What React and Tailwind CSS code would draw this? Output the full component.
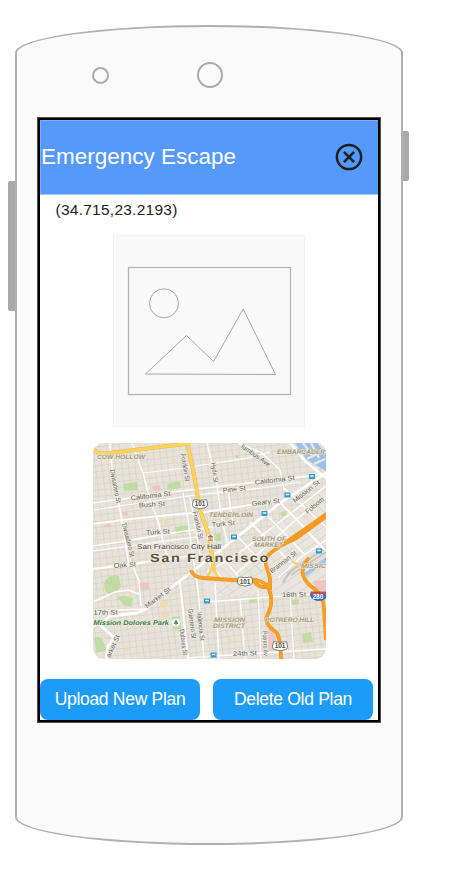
import React from "react";

const minorSteps = Array.from({ length: 48 }, (_, i) => i);

const whiteRoads = [
  ["M110 443 L112 468 L117 492 L122 522 L128 560 L130 566", 1.6],
  ["M132 443 L143 473 L150 500 L158 521 L168 560", 1.4],
  ["M143 473 L184 468 L248 458 L270 452", 1.2],
  ["M93 503 L138 497 L180 491 L206 488 L240 484 L300 477 L326 474", 1.3],
  ["M93 510 L140 503 L196 495 L262 488 L300 482", 1.2],
  ["M93 524 L130 519 L170 515 L205 512 L250 505 L280 499", 2.2],
  ["M93 546 L120 542 L160 535 L205 528 L236 523", 1.4],
  ["M93 551 L130 546 L165 541 L204 536", 1.2],
  ["M93 569 L125 565 L160 560 L190 556", 1.8],
  ["M183 493 L188 520 L192 552 L198 590 L204 659", 1.4],
  ["M190 497 L196 530 L200 555", 1.4],
  ["M207 443 L216 480 L222 520 L228 545", 1.5],
  ["M228 489 L233 525", 1.3],
  ["M238 443 L262 453 L280 470 L284 490", 1.4],
  ["M326 473 L280 503 L246 530 L205 562 L177 583 L146 609 L137 613 L110 616 L100 625 L108 632 L114 638 L108 646 L106 659", 2.8],
  ["M290 443 L306 462 L326 478", 2.4],
  ["M275 497 L326 551", 2],
  ["M262 510 L305 555", 1.8],
  ["M250 522 L290 562", 1.6],
  ["M237 536 L273 574", 1.6],
  ["M284 488 L326 527", 1.6],
  ["M206 559 L224 580", 1.4],
  ["M218 552 L239 577", 1.4],
  ["M326 486 L286 517 L235 556 L207 572", 1.5],
  ["M326 497 L298 518 L248 563 L235 575", 1.5],
  ["M326 540 L300 558 L278 578", 1.5],
  ["M93 612 L120 610 L146 609", 1.4],
  ["M180 582 L184 620 L188 659", 2],
  ["M215 583 L219 659", 1.5],
  ["M205 602 L245 599 L310 594 L326 592", 1.5],
  ["M187 658 L230 655 L326 649", 1.5],
  ["M240 599 L245 659", 1.2],
  ["M258 590 L261 659", 1.2],
  ["M290 595 L294 659", 1.2],
  ["M130 560 L139 581 L141 606", 1.5],
  ["M93 602 L104 597 L115 592 L128 590 L139 594", 1.5],
  ["M93 627 L103 622", 1.3],
];

const parks = [
  "M123 484 L137 482 L138 490 L124 491 Z",
  "M167 484 L180 481 L181 488 L168 490 Z",
  "M175 527 L188 525 L188 531 L176 533 Z",
  "M177 532 L186 531 L187 533 L178 534 Z",
  "M104 583 Q109 573 119 576 L121 587 L111 596 L105 591 Z",
  "M117 597 Q127 594 133 599 L131 607 L125 606 Z",
  "M172 617 L180 616 L181 629 L173 630 Z",
  "M94 638 Q99 634 102 640 L107 650 L96 653 Z",
  "M214 534 L221 533 L221 541 L215 541 Z",
  "M249 598 L256 597 L257 602 L249 603 Z",
  "M291 600 L299 599 L299 604 L292 605 Z",
  "M302 634 L311 632 L313 642 L303 643 Z",
  "M280 514 L284 511 L287 514 L282 517 Z",
  "M235 456 L238 455 L239 458 L236 458 Z",
  "M269 628 L274 627 L274 631 L269 631 Z",
];

const mainStreet = "M91 447 L99 453.5 L105 453.5 L187.5 443.7 L195 480 L200 510 L208 533 L211.5 552 L214 571";

const highway = [
  "M191 570 Q193 577 203 578 L232 580 L256 580 Q266 582 269 589 Q273 600 270 609 L266 619 Q267 626 276 632 Q281 638 281 660",
  "M254 580 Q257 588 267 587 L270 583",
  "M327 514 L292 538 L276 549 Q263 557 266 565 L270 578 L270 590",
  "M309 558 Q301 566 303 575 Q306 584 316 590 Q324 596 324 610 L326 640",
];

const labels = [
  [97, 459.3, 48, "COW HOLLOW", 6.4, "area", 0],
  [277, 454.3, 48, "EMBARCADER", 6.4, "area", 0],
  [209, 517, 44, "TENDERLOIN", 6.4, "area", 0],
  [252, 541, 34, "SOUTH OF", 6.4, "area", 0],
  [254, 547, 29, "MARKET", 6.4, "area", 0],
  [301, 567.5, 25, "MISSIC", 6.4, "area", 0],
  [214, 621.5, 31, "MISSION", 6.4, "area", 0],
  [213, 627.5, 32, "DISTRICT", 6.4, "area", 0],
  [265, 621.5, 49, "POTRERO HILL", 6.4, "area", 0],
  [131, 500.5, 40, "California St", 6.8, "street", -7],
  [139, 507.5, 26, "Bush St", 6.8, "street", -3],
  [146, 535, 24, "Turk St", 6.8, "street", -3],
  [110, 470, 34, "Divisadero St", 6.8, "street", 79],
  [122, 524, 34, "Divisadero St", 6.8, "street", 76],
  [180.5, 454, 28, "Franklin St", 6.8, "street", 80],
  [192.5, 512, 28, "Franklin St", 6.8, "street", 77],
  [211, 463, 20, "Hyde St", 6.8, "street", 82],
  [223, 492.7, 23, "Pine St", 6.8, "street", -6],
  [255, 484.7, 40, "California St", 6.8, "street", -7],
  [252, 506, 28, "Geary St", 6.8, "street", -7],
  [212, 527, 23, "Turk St", 6.8, "street", -5],
  [240.5, 447.5, 34, "lumbus Ave", 6.8, "street", 35],
  [295, 503, 32, "Mission St", 6.8, "street", -38],
  [307.5, 514, 22, "Folsom", 6.8, "street", -39],
  [114, 568, 22, "Oak St", 6.8, "street", -4],
  [147, 608.5, 30, "Market St", 6.8, "street", -37],
  [93.5, 615, 24, "17th St", 6.8, "street", -1],
  [110, 658, 24, "arket St", 6.8, "street", -65],
  [179.5, 629.5, 26, "Dolores St", 6.6, "street", 82],
  [188, 609, 30, "Guerrero St", 6.8, "street", 83],
  [197, 612, 29, "Valencia St", 6.8, "street", 84],
  [272, 573.5, 32, "Brannan St", 6.8, "street", -38],
  [282, 597, 24, "16th St", 6.8, "street", -1],
  [233, 656, 24, "24th St", 6.8, "street", -2],
  [262.5, 631, 25, "Potrero Av", 6.6, "street", 87],
  [137, 549, 84, "San Francisco City Hall", 7, "place", 0],
  [93.5, 625.2, 75.5, "Mission Dolores Park", 6.8, "park", 0],
  [150, 561.5, 120, "San Francisco", 12, "city", 0],
];

const labelClass = {
  area: "fill-[#a49b80] font-bold italic stroke-[#eeeade]",
  street: "fill-[#625e57] stroke-[#f1eee8]",
  place: "fill-[#474239] stroke-[#f1eee8]",
  park: "fill-[#39783b] font-bold italic stroke-[#edf0e4]",
  city: "fill-[#5a4f40] font-bold stroke-[#f4f0e8] tracking-[1.3px]",
};

const transit = [[312, 476.5], [287.5, 495], [264.5, 513.5], [234, 537], [319, 551], [207, 601], [213.5, 655]];
const shields = [[200, 504], [245, 581.3], [280, 646]];

function CityMap() {
  return (
    <svg
      className="h-[216px] w-[233px] rounded-[11px] font-['Liberation_Sans',Arial,sans-serif]"
      viewBox="93 443 233 216"
    >
      <rect x="93" y="443" width="233" height="216" fill="#e8e3da" />
      <g stroke="#d8d3c9" strokeWidth="0.7" fill="none">
        {minorSteps.map((i) => (
          <path key={`h${i}`} d={`M88 ${448 + i * 6.2} L332 ${420 + i * 6.2}`} />
        ))}
        {minorSteps.map((i) => (
          <path key={`v${i}`} d={`M${66 + i * 6.6} 440 L${92 + i * 6.6} 662`} />
        ))}
      </g>
      <path d="M205 578 L327 488 L327 596 L205 596 Z" fill="#e9e5dd" />
      <g stroke="#d6d1c7" strokeWidth="0.8">
        {minorSteps.slice(0, 17).map((i) => (
          <path key={`s${i}`} d={`M${206 + i * 7} ${577 - i * 5.2} L${226 + i * 7} ${597 - i * 5.2}`} />
        ))}
        {minorSteps.slice(0, 7).map((i) => (
          <path key={`t${i}`} d={`M${214 + i * 13} 596 L327 ${514 + i * 10}`} />
        ))}
      </g>
      <g fill="#c0dca2">
        {parks.map((d) => <path key={d} d={d} />)}
      </g>
      <g fill="#eec5c3">
        <path d="M152 486 L160 485 L160 491 L153 491 Z" />
        <path d="M122 512 L127 511 L128 515 L123 516 Z" />
        <path d="M140 583 L148 582 L149 589 L140 590 Z" />
        <path d="M104 525 L111 524 L111 527 L104 527 Z" />
        <path d="M313 581 L327 580 L327 592 L316 590 Z" />
        <path d="M268 625 Q274 628 276 639 L277 651 L269 651 Z" />
      </g>
      <g fill="#eedbb0">
        <path d="M160 602 L168 601 L168 607 L160 608 Z" />
        <path d="M161 612 L169 611 L169 617 L161 617 Z" />
        <path d="M163 520 L167 519 L168 524 L165 527 Z" />
        <path d="M172 458 L176 459 L175 463 L172 462 Z" />
        <path d="M125 647 L130 646 L130 651 L126 651 Z" />
        <path d="M311 504 L318 500 L318 506 L313 510 Z" />
        <path d="M227 639 L231 638 L231 642 L228 642 Z" />
      </g>
      <path d="M295 443 L326 443 L326 471 L307 460 Z" fill="#9ebfe9" />
      <g stroke="#ece8e0" strokeWidth="2.2">
        <path d="M303 443 L312 455" />
        <path d="M311 443 L319 458" />
        <path d="M319 443 L326 453" />
        <path d="M307 459 L317 454" />
        <path d="M314 464 L325 459" />
      </g>
      <path d="M303 574 L326 557 L326 562 L307 576 Z" fill="#a4c5ed" />
      <g fill="none" stroke="#c7c5c0" strokeWidth="2">
        <path d="M283 583 Q288 571 300 565 L326 548" />
        <path d="M291 575 L326 552" />
      </g>
      <g fill="none" stroke="#fdfdfb" strokeLinejoin="round">
        {whiteRoads.map(([d, width]) => <path key={d} d={d} strokeWidth={width} />)}
      </g>
      <g fill="none" strokeLinejoin="round">
        <path d={mainStreet} stroke="#e7b94e" strokeWidth="4" />
        <path d={mainStreet} stroke="#fdd45c" strokeWidth="3" />
        <path d="M213.5 564 L207.5 577 M213 566 L218 578" stroke="#fbcf5a" strokeWidth="2.4" />
        <path d="M292 561 L302 568" stroke="#fbcf78" strokeWidth="2.4" />
        {highway.map((d) => <path key={d} d={d} stroke="#ef951e" strokeWidth="3.8" />)}
        {highway.map((d) => <path key={`${d}c`} d={d} stroke="#fba026" strokeWidth="2.6" />)}
        <path d="M280 548 L293 536 L326 512 L326 519 L297 540 Z" fill="#f49a22" />
      </g>
      <g textRendering="geometricPrecision" strokeWidth="1.2" paintOrder="stroke" strokeLinejoin="round">
        {labels.map(([x, y, width, text, size, kind, angle], i) => (
          <text
            key={i}
            x={x}
            y={y}
            fontSize={size}
            textLength={width}
            lengthAdjust="spacingAndGlyphs"
            transform={`rotate(${angle} ${x} ${y})`}
            className={labelClass[kind]}
          >
            {text}
          </text>
        ))}
      </g>
      {transit.map(([x, y]) => (
        <g key={`${x}-${y}`}>
          <rect x={x - 3} y={y - 2.5} width="6" height="5" rx="0.6" fill="#2d9bd6" />
          <path d={`M${x - 1.8} ${y - 1.2} h3.6 v1.5 h-3.6 z`} fill="#e5f6fd" />
        </g>
      ))}
      {shields.map(([x, y]) => (
        <g key={`${x}-${y}`}>
          <path
            d={`M${x - 6.5} ${y - 4.3} Q${x} ${y - 3} ${x + 6.5} ${y - 4.3} L${x + 7.6} ${y} Q${x + 7.6} ${y + 4} ${x + 3} ${y + 4} L${x} ${y + 4.8} L${x - 3} ${y + 4} Q${x - 7.6} ${y + 4} ${x - 7.6} ${y} Z`}
            fill="#fff"
            stroke="#77746e"
            strokeWidth="0.9"
          />
          <text x={x} y={y + 2.3} textAnchor="middle" fontSize="6.4" className="fill-[#4a4640] font-bold">101</text>
        </g>
      ))}
      <path d="M311 592 H326 V598 Q324 601 318 601 Q311 600 310 595 Z" fill="#3b6db4" />
      <path d="M311 591.5 H326 V594 H310 Z" fill="#c84b50" />
      <text x="312.5" y="599.3" fontSize="6.5" className="fill-white font-bold">280</text>
      <circle cx="210.5" cy="538" r="3.6" fill="#fbf4ec" />
      <path d="M208 537 L210.5 535 L213 537 Z M208 540.5 H213 M209 537.5 V540 M210.5 537.5 V540 M212 537.5 V540" fill="#9b6a4e" stroke="#9b6a4e" strokeWidth="0.7" />
      <circle cx="176" cy="622.5" r="4" fill="#fff" />
      <path d="M176 619.3 L178.4 624 H176.5 V625.5 H175.5 V624 H173.6 Z" fill="#4b9b4d" />
    </svg>
  );
}

function PicturePlaceholder() {
  return (
    <div className="h-[192px] w-[192px] border border-[#f0f0f0] bg-[#f9f9f9]">
      <svg className="h-[190px] w-[190px]" viewBox="114 236 190 190" fill="none" stroke="#a6a6a6" strokeWidth="1">
        <rect x="128.5" y="267.5" width="162" height="127" stroke="#b5b5b5" strokeWidth="1.3" />
        <circle cx="164" cy="303.3" r="14.5" />
        <path d="M145.5 374 L186.5 335.5 L213.5 361.5 L243.2 309 L275.5 374.5 Z" />
      </svg>
    </div>
  );
}

export default function App() {
  return (
    <div className="flex h-[875px] w-[458px] items-start overflow-hidden bg-white pt-[25px] pl-[8px] font-['Liberation_Sans',Arial,sans-serif]">
      <div className="mt-[156px] h-[130px] w-[7px] shrink-0 rounded-l-[2px] bg-[#a9a9a9]" />
      <div className="flex h-[820px] w-[388px] shrink-0 flex-col rounded-[50%/28px] border-2 border-[#b0b0b0] bg-[#fafafa]">
        <header className="flex h-[90px] shrink-0 items-start">
          <div className="mt-[40px] ml-[75px] h-[17px] w-[17px] rounded-full border-2 border-[#aaa]" />
          <div className="mt-[35px] ml-[88px] h-[26px] w-[26px] rounded-full border-2 border-[#aaa]" />
        </header>
        <main className="mt-px ml-[21px] flex h-[604px] w-[342px] shrink-0 flex-col border-2 border-black bg-white ring-1 ring-[#505050]">
          <div className="flex h-[75px] shrink-0 items-center justify-between border-t border-b border-l border-t-[#78affc] border-b-[#a8cbfd] border-l-[#78affc] bg-[#5599fb] pr-[15px] pb-[2px]">
            <h1 className="text-[22.5px] leading-[26px] text-white">Emergency Escape</h1>
            <svg className="h-[28px] w-[28px]" viewBox="0 0 28 28" fill="none" stroke="#1e2022">
              <circle cx="14" cy="14" r="12.1" strokeWidth="2.5" />
              <path d="M8.9 8.9 L19.1 19.1 M19.1 8.9 L8.9 19.1" strokeWidth="2.6" />
            </svg>
          </div>
          <p className="mt-[5px] ml-[15.5px] h-[20px] text-[15.5px] leading-[20px] tracking-[0.25px] text-[#1c1c1c]">
            (34.715,23.2193)
          </p>
          <div className="mt-[15px] ml-[73px]">
            <PicturePlaceholder />
          </div>
          <div className="mt-[16px] ml-[53px] h-[216px]">
            <CityMap />
          </div>
          <div className="mt-[20px] flex gap-[13px]">
            <button className="h-[41px] w-[160px] rounded-[8px] bg-[#1d9bf9] text-[17.5px] tracking-[-0.3px] text-white">
              Upload New Plan
            </button>
            <button className="h-[41px] w-[160px] rounded-[8px] bg-[#1d9bf9] text-[17.5px] tracking-[-0.3px] text-white">
              Delete Old Plan
            </button>
          </div>
        </main>
      </div>
      <div className="mt-[106px] h-[50px] w-[6px] shrink-0 rounded-r-[2px] bg-[#a9a9a9]" />
    </div>
  );
}
